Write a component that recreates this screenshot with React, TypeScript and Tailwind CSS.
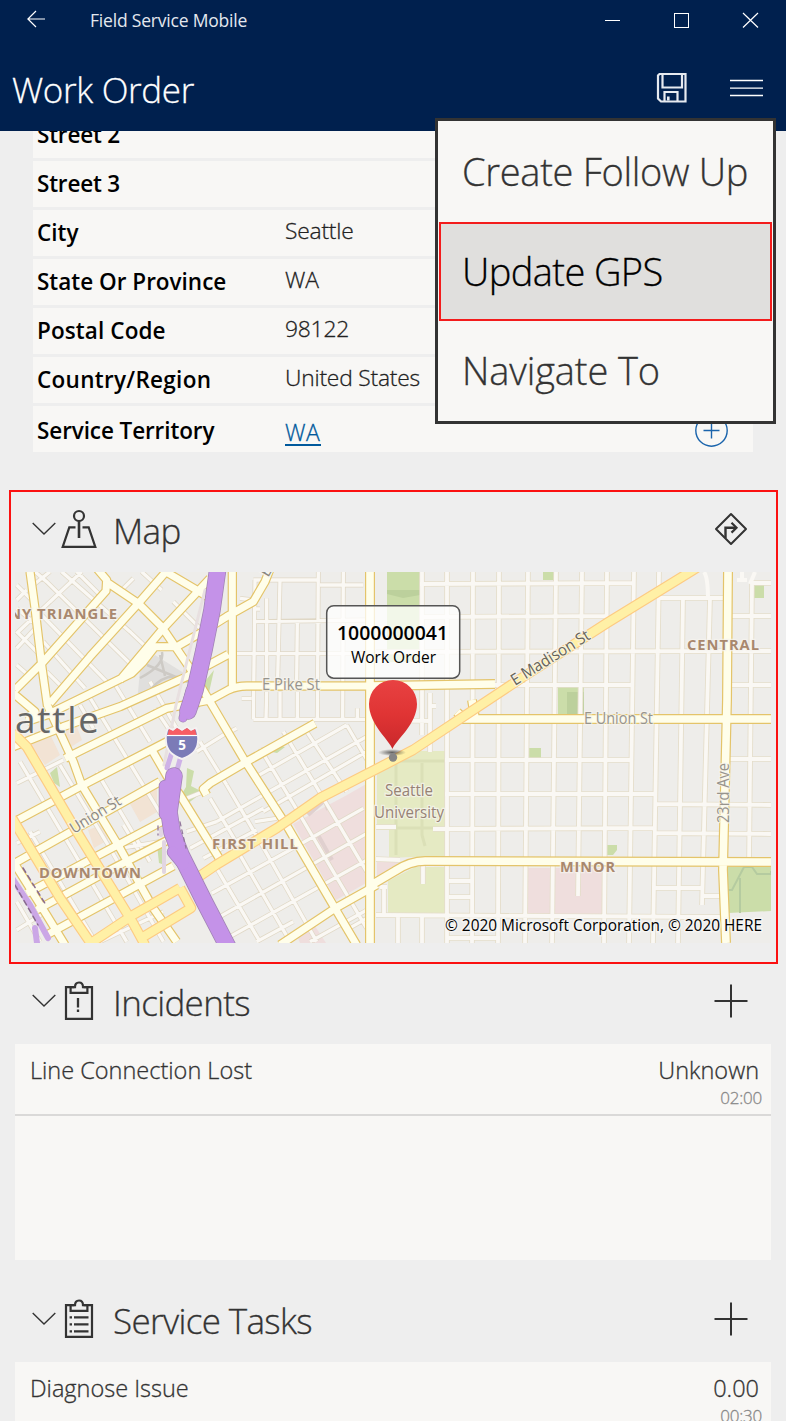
import React from "react";

const LIGHT = "font-['Open_Sans','Noto_Sans',sans-serif] font-light [-webkit-text-stroke:0.3px_currentColor]";
const REGULAR = "font-['Open_Sans','Noto_Sans',sans-serif] font-normal";
const SEMI = "font-['Open_Sans','Noto_Sans',sans-serif] font-semibold";

/* ---------- icons ---------- */

const Chevron = () => (
  <svg width="24" height="14" viewBox="0 0 24 14" fill="none" stroke="#333" strokeWidth="1.4" className="shrink-0">
    <path d="M.7 1 12 12 23.3 1" />
  </svg>
);

const MapIcon = () => (
  <svg width="36" height="40" viewBox="0 0 36 40" fill="none" stroke="#333" strokeWidth="2.2" className="-mt-[2px] shrink-0">
    <circle cx="18" cy="7" r="5" />
    <path d="M18 12v17" strokeWidth="2.6" />
    <path d="M14.5 18.3H8.3L1.7 37.8h32.6L27.7 18.3h-6.2" />
  </svg>
);

const ClipboardBase = ({ children }: { children: React.ReactNode }) => (
  <svg width="30" height="40" viewBox="0 0 30 40" fill="none" stroke="#333" strokeWidth="2.2" className="-mt-[2px] shrink-0">
    <path d="M10.500 6.200H2v31.600h26V6.200h-8.500" />
    <path d="M6.600 6.200v5.600h16.800V6.200" />
    <path d="M6 6.200h5c0-2.800 1.200-4.700 4-4.700s4 1.900 4 4.700h5" />
    {children}
  </svg>
);

const IncidentIcon = () => (
  <ClipboardBase>
    <path d="M14 17v9.500M14 28.600v2.400" strokeWidth="2.300" />
  </ClipboardBase>
);

const TaskIcon = () => (
  <ClipboardBase>
    <path d="M5.600 18.300h2.400M5.600 25.300h2.400M5.600 32.300h2.400" />
    <path d="M10 18.300h14.500M10 25.300h14.500M10 32.300h14.500" />
  </ClipboardBase>
);

const Plus = () => (
  <svg width="34" height="34" viewBox="0 0 34 34" stroke="#333" strokeWidth="2" className="-mt-px shrink-0">
    <path d="M17 .5v33M.5 17h33" />
  </svg>
);

const Directions = () => (
  <svg width="34" height="34" viewBox="0 0 34 34" fill="none" stroke="#333" strokeWidth="2" className="-mt-[2px] shrink-0">
    <path d="M17 2 32 17 17 32 2 17z" strokeLinejoin="round" />
    <path d="M11.500 26V15.700H22" strokeWidth="2.400" />
    <path d="M17.500 10.800l5 4.900-5 4.900" strokeWidth="2.200" />
  </svg>
);

const Save = () => (
  <svg width="32" height="32" viewBox="0 0 32 32" fill="none" stroke="#e6eaf0" strokeWidth="2.200" className="mt-[3px] shrink-0">
    <path d="M3.500 2H29.500V29.500H5L2 26.500V3.500Z" />
    <path d="M6.500 2v13.500h19.500V2" />
    <path d="M8.500 29.500v-9.500h13v9.500" />
    <path d="M12.300 28.500v-4" strokeWidth="2.600" />
  </svg>
);

/* ---------- map ---------- */

const lines = (pts: [number, number, number, number][]) => pts.map(([a, b, c, d]) => `M${a} ${b}L${c} ${d}`).join("");

const gridEast = lines([
  [528, 572, 525, 943], [556, 572, 552, 943], [582, 572, 578, 896], [607, 572, 604, 943],
  [634, 572, 629, 943], [659, 572, 653, 943], [683, 598, 678, 943], [710, 598, 702, 905],
  [752, 583, 749, 865], [422, 572, 422, 684], [447, 572, 447, 943], [473, 572, 472, 943], [499, 572, 498, 943],
  [420, 584, 633, 583], [420, 617, 607, 616], [376, 652, 771, 651], [376, 685, 633, 685],
  [659, 598, 726, 598], [730, 616, 771, 616], [730, 685, 771, 685], [752, 583, 771, 583],
  [445, 760, 630, 760], [445, 794, 654, 794], [730, 759, 771, 759], [654, 804, 771, 805],
  [433, 829, 654, 828], [654, 833, 771, 834], [654, 888, 702, 888], [702, 896, 722, 896],
  [376, 915, 720, 917], [449, 881, 472, 881], [449, 897, 472, 897],
  [398, 915, 398, 943], [422, 915, 422, 943], [447, 938, 500, 938], [376, 827, 396, 827], [376, 859, 400, 860],
  [380, 887, 387, 887], [384, 887, 384, 915], [423, 863, 423, 884], [376, 720, 430, 721],
  [422, 690, 422, 735], [430, 693, 430, 752], [430, 706, 436, 706],
]);

/* west half, drawn at three units per pixel */
const minorWest = lines([
  [730, 45, 920, 45], [930, 60, 1060, 60], [730, 170, 1070, 165], [680, 266, 1070, 266], [730, 463, 1080, 463],
  [735, 45, 730, 463], [770, 100, 770, 340], [810, 45, 803, 345], [862, 170, 860, 345], [925, 20, 922, 460],
  [1000, 20, 998, 460], [770, 380, 768, 463], [810, 380, 810, 463], [862, 380, 862, 463], [1042, 430, 1042, 463],
  [690, 100, 730, 105], [695, 400, 725, 400], [735, 132, 750, 132],
  [155, 20, 360, 200], [360, 200, 425, 262], [75, 20, 110, 50], [110, 50, 375, 310], [95, 150, 290, 350],
  [100, 230, 225, 370], [110, 320, 170, 380], [20, 200, 90, 270], [20, 130, 80, 180], [20, 60, 65, 105],
  [395, 20, 455, 75], [490, 110, 570, 190], [20, 300, 60, 335], [200, 20, 270, 90],
  [215, 20, 120, 110], [120, 110, 20, 205], [20, 250, 80, 185], [120, 20, 70, 60], [370, 40, 330, 80], [50, 75, 20, 105],
  [235, 390, 460, 760], [310, 350, 420, 530], [435, 430, 475, 490], [420, 350, 500, 490],
  [30, 590, 350, 1130], [60, 800, 250, 1120], [150, 600, 300, 850], [300, 850, 460, 1130], [20, 1010, 90, 1130],
  [260, 620, 420, 890], [340, 780, 400, 880], [210, 420, 250, 490],
  [20, 655, 160, 585], [20, 835, 90, 800], [20, 1095, 100, 1045], [330, 850, 480, 825], [270, 1130, 460, 1040],
  [570, 530, 650, 660], [650, 660, 750, 830], [750, 830, 920, 1130], [750, 550, 870, 750], [870, 750, 1070, 1090],
  [820, 500, 940, 700], [940, 700, 1070, 920], [890, 500, 1010, 680], [1010, 480, 1080, 600], [620, 910, 750, 1130],
  [690, 870, 840, 1130], [530, 700, 580, 680], [600, 700, 690, 850],
  [560, 560, 640, 510], [640, 510, 680, 490], [620, 770, 760, 690], [530, 800, 620, 770], [540, 850, 760, 730],
  [760, 690, 1070, 515], [730, 640, 1010, 480], [580, 880, 740, 795], [760, 740, 1070, 560],
  [605, 985, 840, 855], [840, 855, 1060, 730], [630, 1055, 1080, 800], [660, 1115, 1080, 880], [740, 1130, 850, 1070],
  [900, 1130, 1080, 1030], [735, 770, 800, 760], [1000, 1100, 1070, 1060],
]);

const majorWest = [
  "M60 20L75 130L95 300L112 420L190 590L215 660L330 850L430 1030L500 1130",
  "M15 375L100 290L288 78L290 45L262 12",
  "M120 415L240 275L385 115L475 12",
  "M330 345L460 190L600 40",
  "M288 50L385 115L455 185L540 310L600 410L700 580L835 790L975 1030L1040 1140",
  "M475 25L555 72L600 100",
  "M10 385L75 440L50 460",
  "M50 470L110 450L365 325L400 290L435 245L500 245L570 205L650 155L730 110L765 50L780 12",
  "M10 545L160 485L330 425L530 335L655 268",
  "M165 580L470 430L600 405L655 375Q680 363 710 363L1080 363",
  "M10 772L220 660L480 525",
  "M10 897L450 650",
  "M50 985L459 768",
  "M80 1035L300 915L480 822",
  "M110 1110L490 903",
  "M420 545L475 640L510 690L640 900",
  "M10 890L110 1050L165 1140",
  "M590 690L580 672L600 655L710 590L915 475",
  "M810 1140L975 1030L1100 960",
  "M667 12V372",
];

const majorEast = [
  "M370 572V943",
  "M368 887L395 871Q410 861 425 861L771 862",
  "M457 712L464 719L771 719",
  "M728 572L727 700L723 870L726 943",
  "M369 686L495 684M472 700L475 718",
];

const primaries = [
  "M10 732L15 735L27 747L77 832L133 923L145 945",
  "M12 818L60 898L92 945",
  "M88 945L133 915L180 888M197 878L216 865L277 828L320 798L390 762L413 750L520 679L607 623L690 572L706 562",
  "M180 888L191 908L138 940",
];

const Road = ({ d, casing, fill, wide, narrow }: { d: string; casing: string; fill: string; wide: number; narrow: number }) => (
  <g fill="none" strokeLinejoin="round">
    <path d={d} stroke={casing} strokeWidth={wide} />
    <path d={d} stroke={fill} strokeWidth={narrow} />
  </g>
);

type LabelProps = {
  x: number; y: number; len: number; size: number; fill: string; children: string; rotate?: number; weight?: number;
};

const MapLabel = ({ x, y, len, size, fill, children, rotate = 0, weight = 400 }: LabelProps) => (
  <text
    x={x}
    y={y}
    textLength={len}
    fontSize={size}
    fontWeight={weight}
    fill={fill}
    stroke="#f6f4ef"
    strokeOpacity=".75"
    strokeWidth="2.500"
    paintOrder="stroke"
    transform={`rotate(${rotate} ${x} ${y})`}
    lengthAdjust={size < 30 ? "spacingAndGlyphs" : "spacing"}
    letterSpacing={weight === 700 ? 1 : 0}
  >
    {children}
  </text>
);

const CityMap = () => (
  <svg viewBox="15 572 756 371" className="block h-[371px] w-[756px] font-['Open_Sans','Noto_Sans',sans-serif]">
    <defs>
      <linearGradient id="pin" x1="0" y1="0" x2="0" y2="1">
        <stop offset="0" stopColor="#e84242" />
        <stop offset=".5" stopColor="#e03434" />
        <stop offset="1" stopColor="#c9282b" />
      </linearGradient>
      <radialGradient id="shadow">
        <stop offset="0" stopColor="#222" stopOpacity=".7" />
        <stop offset="1" stopColor="#222" stopOpacity="0" />
      </radialGradient>
    </defs>
    <rect x="15" y="572" width="756" height="371" fill="#eeedea" />

    <g fill="#cbdda9">
      <path d="M387 572h33l-1 50v40h-32z" />
      <path d="M543 572h11v8h-11zM558 687h26v28h-26zM754 585h10v13h-10zM529 748h12v10h-12zM607 845h10v5l-4 5h-6zM728 867h43v44l-43 2z" />
      <path d="M206 680l8-10-6 27-10 12zM50 773l7-6 3 20-6-4zM187 768l7 3-3 15 12 6-20 15-3-10 6-10zM157 845l8-5v25l-6-2zM272 752l9-6 4 1-8 6z" />
    </g>
    <g fill="#bcd09c">
      <path d="M387 590h33v5l-17 3-16-4zM567 692h17v23h-17z" />
    </g>
    <path d="M728 890h4l12-23h8l5 7h14v-3M740 878v35" fill="none" stroke="#b5cba0" strokeWidth="2" />
    <path d="M377 772L410 751H445V857H412L389 858V830H377zM388 881L415 867H445V913H388z" fill="#e5eac3" />
    <path d="M396 760V855M422 763V835L425 846M396 761H445M396 828H445" fill="none" stroke="#dbe0b7" strokeWidth="3" />
    <path d="M368 783L347 795L293 824L336 900L368 882zM377 862H400L377 877zM298 938L315 926L326 943H300zM527 868H602V914H527z" fill="#efdedd" />
    <path d="M30 743L48 730L60 755L45 765zM62 732L75 722L82 740L66 750zM130 804L157 788L157 812L140 822zM88 830L104 824L108 840L94 848z" fill="#f2e3d4" />
    <path d="M140 670L155 655L187 675L150 695L137 704z" fill="#e0dfdd" />
    <path d="M308 815L325 800L328 810M318 835L332 860" fill="none" stroke="#e0d0cf" strokeWidth="4" />

    <g transform="translate(10 565) scale(.33333)">
      <Road d={minorWest} casing="#e0d8c6" fill="#faf8f4" wide={14.500} narrow={10} />
    </g>
    <Road d={gridEast} casing="#e5decb" fill="#faf8f4" wide={5.6} narrow={3.8} />
    <path d="M140 678Q165 665 162 652M147 665L188 682M150 690Q165 672 183 678M160 655L165 676" fill="none" stroke="#cdcac5" strokeWidth="2.500" />
    <path d="M704 572Q708 577 708 600" fill="none" stroke="#faf8f4" strokeWidth="4" />
    <path d="M742 572v9M755 572l-5 12M737 580h10" fill="none" stroke="#faf8f4" strokeWidth="4" />

    <g fill="none" stroke="#fffeea">
      <g transform="translate(10 565) scale(.33333)" strokeLinejoin="round">
        <path d={majorWest.join("")} stroke="#e4c46a" strokeWidth="28" />
      </g>
      <path d={majorEast.join("")} stroke="#e4c46a" strokeWidth="10" />
      <path d={majorEast.join("")} strokeWidth="7.600" />
      <g transform="translate(10 565) scale(.33333)" strokeLinejoin="round">
        <path d={majorWest.join("")} strokeWidth="21" />
      </g>
    </g>
    <Road d={primaries.join("")} casing="#fdcb83" fill="#fff0a6" wide={10.5} narrow={8.2} />

    <g fill="none" strokeLinejoin="round" strokeLinecap="round">
      <path d="M12 878L30 905L48 938M35 928L37 943" stroke="#cba7e6" strokeWidth="6" />
      <path d="M15 885L38 925M23 868L46 905" stroke="#886a8e" strokeWidth="1.500" strokeDasharray="5 4" />
      <path d="M205 590L186 665L176 705L164 765" stroke="#e8e0e0" strokeWidth="3" />
      <path d="M172 752L167 768M181 756L177 770" stroke="#ceb2e7" strokeWidth="5" />
      <path d="M161 829v6M164 842v30" stroke="#e2d6e2" strokeWidth="4" />
      <g stroke="#a184b4">
        <path d="M219 560L212 610L204 650L195 690L188 711" strokeWidth="17.500" />
        <path d="M183 718L190 690" strokeWidth="9" />
        <path d="M174 776L169 812L172 832L181 855L204 901L232 955" strokeWidth="17.500" />
        <path d="M165 786V814M173 852l10 12" strokeWidth="12.500" />
      </g>
      <g stroke="#c492e8">
        <path d="M219 560L212 610L204 650L195 690L188 711" strokeWidth="16" />
        <path d="M183 718L190 690" strokeWidth="7.500" />
        <path d="M174 776L169 812L172 832L181 855L204 901L232 955" strokeWidth="16" />
        <path d="M165 786V814M173 852l10 12" strokeWidth="11" />
      </g>
      <path d="M180 822L186 848M158 826v9" stroke="#93789d" strokeWidth="1.300" strokeDasharray="4 4" />
    </g>

    <path d="M168 728l5 2 4-3 5 3 5-3 4 3 5-2q3 7 2 14-1 12-16 17-15-5-16-17-1-8 2-14z" fill="#7b7bb7" stroke="#f4f1f2" strokeWidth="2" />
    <path d="M169 729l4 2 4-3 5 3 5-3 4 3 4-2 1.500 6h-29z" fill="#f75d64" />
    <path d="M167 735.500h30" stroke="#fff" strokeWidth="1.200" />
    <text x="182" y="750" textAnchor="middle" fontSize="13.500" fontWeight="700" fill="#fff">5</text>

    <MapLabel x={9} y={619} len={109} size={15} weight={700} fill="#a9886e">NY TRIANGLE</MapLabel>
    <MapLabel x={39} y={878} len={103} size={15} weight={700} fill="#a9886e">DOWNTOWN</MapLabel>
    <MapLabel x={212} y={849} len={87} size={15} weight={700} fill="#a9886e">FIRST HILL</MapLabel>
    <MapLabel x={687} y={650} len={73} size={15} weight={700} fill="#a9886e">CENTRAL</MapLabel>
    <MapLabel x={560} y={872} len={56} size={15} weight={700} fill="#a9886e">MINOR</MapLabel>
    <MapLabel x={15} y={733} len={84} size={37} fill="#666">attle</MapLabel>
    <MapLabel x={262} y={690} len={58} size={15.500} fill="#97948c">E Pike St</MapLabel>
    <MapLabel x={584} y={723.500} len={69} size={15.500} fill="#97948c">E Union St</MapLabel>
    <MapLabel x={74} y={834} len={57} size={15.500} fill="#88857f" rotate={-32}>Union St</MapLabel>
    <MapLabel x={515} y={686} len={90} size={16} fill="#65635a" rotate={-32}>E Madison St</MapLabel>
    <MapLabel x={268} y={578} len={10} size={15} fill="#88857f" rotate={-60}>E</MapLabel>
    <MapLabel x={729} y={823} len={60} size={15.500} fill="#97948c" rotate={-90}>23rd Ave</MapLabel>
    <MapLabel x={385} y={796} len={48} size={15.500} weight={500} fill="#968274">Seattle</MapLabel>
    <MapLabel x={374} y={818} len={70} size={15.500} weight={500} fill="#968274">University</MapLabel>

    <ellipse cx="392" cy="752.500" rx="14" ry="3.500" fill="url(#shadow)" />
    <circle cx="393" cy="757.500" r="4.200" fill="#858585" />
    <path d="M392.500 749C389 740 369 724 369 704A24 24 0 0 1 417 704C417 724 396 740 392.500 749Z" fill="url(#pin)" />
    <rect x="326.700" y="605.700" width="133" height="72.500" rx="7" fill="#fff" fillOpacity=".75" stroke="#555" strokeWidth="1.500" />
    <text x="337" y="640" textLength="111" lengthAdjust="spacingAndGlyphs" fontSize="20.500" fontWeight="600" fill="#000">1000000041</text>
    <text x="351" y="663" textLength="85" lengthAdjust="spacingAndGlyphs" fontSize="16.500" fill="#000">Work Order</text>
    <text
      x="445" y="931" textLength="317" lengthAdjust="spacingAndGlyphs" fontSize="15.500" fill="#000"
      stroke="#f7f7f5" strokeWidth="3" strokeOpacity=".8" paintOrder="stroke"
    >
      © 2020 Microsoft Corporation, © 2020 HERE
    </text>
  </svg>
);

/* ---------- page ---------- */

const Field = ({ label, value, tracking = "" }: { label: string; value?: string; tracking?: string }) => (
  <div className="flex h-[46px] shrink-0 items-center bg-[#f8f7f5] pl-1">
    <span className={`${SEMI} w-[248px] text-[22.5px] leading-[30px] text-black ${tracking}`}>{label}</span>
    <span className={`${LIGHT} -mt-1 text-[22.8px] leading-[30px] tracking-[-0.2px] text-[#222]`}>{value}</span>
  </div>
);

type HeadProps = { icon: React.ReactNode; title: string; action: React.ReactNode };

const SectionHead = ({ icon, title, action }: HeadProps) => (
  <div className="flex h-[80px] items-center pb-[5px] pl-8 pr-[38px]">
    <span className="-mt-[2px]"><Chevron /></span>
    <span className="ml-[5px] flex w-[36px] justify-center">{icon}</span>
    <h2 className={`${LIGHT} ml-4 flex-1 pt-[3px] text-[35px] leading-[48px] tracking-[-0.65px] text-[#333]`}>{title}</h2>
    {action}
  </div>
);

type ItemProps = { name: string; status: string; time: string };

const ListItem = ({ name, status, time }: ItemProps) => (
  <div className="flex h-[72px] justify-between border-b-2 border-[#dad9d8] pl-[15px] pr-[9px] pt-[9px]">
    <span className={`${LIGHT} text-[23.5px] leading-[34px] text-[#333]`}>{name}</span>
    <span className="flex flex-col items-end">
      <span className={`${LIGHT} mr-[3px] text-[23.5px] leading-[34px] text-[#333]`}>{status}</span>
      <span className={`${LIGHT} text-[17px] leading-[22px] tracking-[-0.2px] text-[#888]`}>{time}</span>
    </span>
  </div>
);

export default function App() {
  return (
    <div className="relative flex h-[1421px] w-[786px] flex-col overflow-hidden bg-[#eee]">
      <header className="z-10 flex h-[131px] shrink-0 flex-col bg-[#00204e] text-white">
        <div className="flex h-[41px] items-center pl-[27px] pr-[27px]">
          <svg width="18" height="18" viewBox="0 0 18 18" fill="none" stroke="#fff" strokeWidth="1.200" className="-mt-[3px]">
            <path d="M9 1 .9 9 9 17M1 9h17" />
          </svg>
          <span className={`${REGULAR} ml-[45px] flex-1 text-[17.500px] tracking-[-0.2px] text-[#e4e8ef]`}>Field Service Mobile</span>
          <svg width="154" height="16" viewBox="0 0 154 16" fill="none" stroke="#fff" strokeWidth="1" shapeRendering="crispEdges" className="-mt-px">
            <path d="M0 8.500h15M69.500 1.500h14v14h-14z" />
            <path d="M138 1l15 14.500M153 1l-15 14.500" shapeRendering="auto" strokeWidth="1.200" />
          </svg>
        </div>
        <div className="flex h-[90px] items-center pl-3 pr-[22px]">
          <h1 className={`${LIGHT} flex-1 pt-[8px] text-[35px] leading-[48px] tracking-[-0.35px]`}>Work Order</h1>
          <Save />
          <svg width="34" height="18" viewBox="0 0 34 18" stroke="#fff" strokeWidth="1.300" className="ml-[42px] mt-[3px]">
            <path d="M0 1.500h33M0 9.200h33M0 16.500h33" />
          </svg>
        </div>
      </header>

      <div className="-mt-[19px] flex w-[753px] shrink-0 flex-col gap-[3px] pl-[33px]">
        <Field label="Street 2" tracking="tracking-[-0.2px]" />
        <Field label="Street 3" tracking="tracking-[-0.2px]" />
        <Field label="City" value="Seattle" />
        <Field label="State Or Province" value="WA" />
        <Field label="Postal Code" value="98122" tracking="tracking-[0.1px]" />
        <Field label="Country/Region" value="United States" tracking="tracking-[0.3px]" />
        <div className="flex h-[46px] items-center bg-[#f8f7f5] pl-1 pr-[25px]">
          <span className={`${SEMI} mt-1 w-[248px] text-[22.5px] leading-[30px] tracking-[-0.1px] text-black`}>Service Territory</span>
          <span className={`${LIGHT} mt-[6px] flex-1 text-[23px] leading-[30px] tracking-[0.6px] text-[#00599c]`}>
            <span className="inline-block border-b-2 border-[#00599c] leading-[24px]">WA</span>
          </span>
          <svg width="33" height="33" viewBox="0 0 33 33" fill="none" stroke="#1a64ac" strokeWidth="1.400" className="mt-[3px]">
            <circle cx="16.500" cy="16.500" r="15.700" />
            <path d="M16.500 8.500v16M8.500 16.500h16" />
          </svg>
        </div>
      </div>

      <section className="ml-[9px] mt-[38px] flex h-[474px] w-[769px] shrink-0 flex-col border-2 border-[#fb1111]">
        <div className="-ml-[11px] w-[786px]">
          <SectionHead icon={<MapIcon />} title="Map" action={<Directions />} />
        </div>
        <div className="ml-1">
          <CityMap />
        </div>
      </section>

      <section className="flex shrink-0 flex-col">
        <SectionHead icon={<IncidentIcon />} title="Incidents" action={<Plus />} />
        <div className="mx-[15px] h-[216px] bg-[#f8f7f5]">
          <ListItem name="Line Connection Lost" status="Unknown" time="02:00" />
        </div>
      </section>

      <section className="mt-[22px] flex shrink-0 flex-col">
        <SectionHead icon={<TaskIcon />} title="Service Tasks" action={<Plus />} />
        <div className="mx-[15px] h-[72px] bg-[#f8f7f5]">
          <ListItem name="Diagnose Issue" status="0.00" time="00:30" />
        </div>
      </section>

      <nav className="absolute left-[435px] top-[118px] z-20 flex h-[306px] w-[341px] flex-col border-[3px] border-[#333] bg-[#f8f7f5]">
        <div className={`${LIGHT} flex h-[101px] items-center pl-6 text-[38px] tracking-[-0.3px] text-[#333]`}>Create Follow Up</div>
        <div className={`${LIGHT} mx-px flex h-[99px] items-center border-2 border-[#f31c1c] bg-[#e0dfdd] pl-[21px] text-[38px] tracking-[-0.6px] text-black`}>
          Update GPS
        </div>
        <div className={`${LIGHT} flex h-[98px] items-center pl-6 text-[38px] tracking-[-0.1px] text-[#333]`}>Navigate To</div>
      </nav>
    </div>
  );
}
